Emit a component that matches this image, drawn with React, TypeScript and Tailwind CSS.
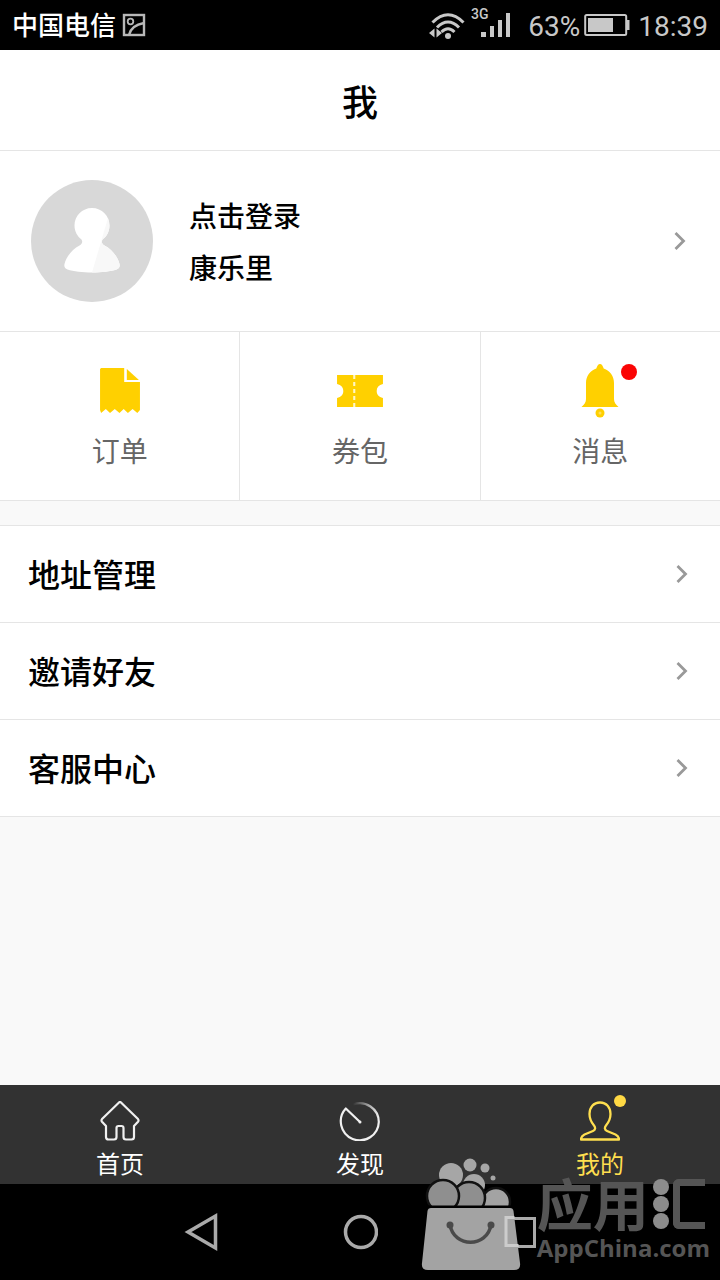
import type { ReactNode } from "react";

function Chevron() {
  return (
    <svg width="12" height="20" viewBox="0 0 12 20" fill="none" stroke="#999999" strokeWidth="2.8" aria-hidden="true">
      <path d="M1.500 2 9.500 10l-8 8" />
    </svg>
  );
}

function StatusBar() {
  return (
    <div className="flex h-[50px] items-center justify-between bg-black px-3 text-[#c8c8c8]">
      <div className="flex items-center gap-1.5">
        <span className="pb-0.5 text-[26px] font-medium leading-8 text-white">中国电信</span>
        <svg width="24" height="24" viewBox="0 0 24 24" fill="none" stroke="#b8b8b8" strokeWidth="2.4" aria-hidden="true">
          <rect x="2" y="2" width="20" height="20" />
          <circle cx="8.500" cy="8.500" r="2.800" strokeWidth="1.8" />
          <path d="M7 22C8.500 15.500 13 11.500 22 10" />
        </svg>
      </div>
      <div className="flex items-center">
        <svg width="84" height="34" viewBox="0 0 84 34" fill="none" aria-hidden="true">
          <g stroke="#c8c8c8" strokeWidth="3">
            <path d="M4.500 14.500Q20 -1 35.500 14.500" />
            <path d="M9 19.500Q20 8.500 31 19.500" />
            <path d="M13.500 24Q20 17.500 26.500 24" />
          </g>
          <circle cx="20" cy="28" r="3" fill="#c8c8c8" />
          <path d="M6.500 20.500v9L1 25zM8.500 20.500v9L14 25z" fill="#c8c8c8" />
          <text x="43" y="11" fill="#c8c8c8" fontSize="14" fontWeight="500" fontFamily="Roboto, sans-serif">3G</text>
          <path d="M53 24h5v5h-5zM62 18h4v11h-4zM70 12h4v17h-4zM78 5h4v24h-4z" fill="#c8c8c8" />
        </svg>
        <span className="ml-4 pt-1 font-[Roboto,sans-serif] text-[28px] leading-8">63%</span>
        <svg className="ml-1" width="46" height="24" viewBox="0 0 46 24" fill="none" aria-hidden="true">
          <rect x="1.200" y="2" width="41" height="20" rx="1.500" stroke="#c8c8c8" strokeWidth="2" />
          <path d="M4 5h25v14H4zM43 7h2.500v10H43z" fill="#c8c8c8" />
        </svg>
        <span className="ml-2 pt-1 font-[Roboto,sans-serif] text-[28px] leading-8">18:39</span>
      </div>
    </div>
  );
}

function Avatar() {
  return (
    <svg width="122" height="122" viewBox="0 0 122 122" aria-hidden="true">
      <circle cx="61" cy="61" r="61" fill="#d8d8d8" />
      <path
        d="M61 28c10 0 17.500 8 17.500 17.500 0 6-3 11-7 14-1.500 2.500-.5 4.500 2 6C81 69.500 87 77 88.500 84c.7 3-.5 4.500-3 5.500-6 2-15 3-24.500 3s-18.500-1-24.500-3c-2.500-1-3.700-2.500-3-5.500C35 77 41 69.500 48.500 65.500c2.500-1.500 3.500-3.500 2-6-4-3-7-8-7-14C43.500 36 51 28 61 28z"
        fill="#ffffff"
      />
      <path d="M77 38c3 9 1 17-5.500 21.500-1.500 2.500-.5 4.500 2 6C81 69.500 87 77 88.500 84c.7 3-.5 4.500-3 5.500-6 2-15 3-24.500 3z" fill="#f8f8f8" />
    </svg>
  );
}

function OrderIcon() {
  return (
    <svg width="42" height="46" viewBox="0 0 40 46" preserveAspectRatio="none" fill="#ffd000" aria-hidden="true">
      <path d="M2 0h22v14h15v28l-2.500 3-4.500-4-4.500 4-4-4-4 4-4.500-4-4.500 4-4-4-4.500 4L1 42V1z" />
      <path d="M26.500 1 38 12H26.500z" />
    </svg>
  );
}

function CouponIcon() {
  return (
    <svg width="48" height="34" viewBox="0 0 46 34" preserveAspectRatio="none" aria-hidden="true">
      <path d="M1 1h44v9c-4 1-6 3.500-6 7s2 6 6 7v9H1v-9c4-1 6-3.500 6-7s-2-6-6-7z" fill="#ffd000" />
      <path d="M17.500 1v32" stroke="#fff6c8" strokeWidth="2" strokeDasharray="4 3" />
    </svg>
  );
}

function BellIcon() {
  return (
    <svg width="38" height="54" viewBox="0 0 38 54" fill="#ffd000" aria-hidden="true">
      <path d="M19 0c1.800 0 2.800 2 3.700 4.500C29 7 33 12 33 19v16c0 3 1.500 5.500 4.500 8H.5C3.500 40.500 5 38 5 35V19C5 12 9 7 15.300 4.500 16.200 2 17.200 0 19 0z" />
      <circle cx="19" cy="49" r="4.500" />
      <circle cx="19" cy="49" r="1.500" fill="#ffdf5c" />
    </svg>
  );
}

const rows = ["地址管理", "邀请好友", "客服中心"];

function Shortcut({ icon, label, dot }: { icon: ReactNode; label: string; dot?: boolean }) {
  return (
    <button type="button" className="flex flex-1 flex-col items-center border-r border-[#e5e5e5] pb-[30px] last:border-r-0">
      <span className="relative flex h-[98px] items-center pt-5">
        {icon}
        {dot && <span className="absolute -right-[18px] top-8 size-4 rounded-full bg-[#fa0505]" />}
      </span>
      <span className="text-[28px] leading-10 text-[#666666]">{label}</span>
    </button>
  );
}

function TabBar() {
  return (
    <nav className="flex h-[99px] bg-[#323232] text-2xl leading-8 text-white">
      <a href="#home" className="flex flex-1 flex-col items-center gap-1.5 pt-4">
        <svg width="40" height="40" viewBox="0 0 40 40" fill="none" stroke="#f0f0f0" strokeWidth="2.200" strokeLinejoin="round" aria-hidden="true">
          <path d="M19 1.500Q20 .5 21 1.500L38 18q1 1.500 0 2.700L34 25v11q0 2.500-2.500 2.500H26q-2.500 0-2.500-2.500V27q0-2-2-2h-3q-2 0-2 2v9q0 2.500-2.500 2.500H8.500Q6 38.500 6 36V25l-4-4.300Q1 19.500 2 18z" />
        </svg>
        首页
      </a>
      <a href="#discover" className="flex flex-1 flex-col items-center gap-1.5 pt-4">
        <svg width="42" height="40" viewBox="0 0 42 40" fill="none" stroke="#f0f0f0" strokeWidth="2.200" aria-hidden="true">
          <defs>
            <linearGradient id="dial" x1="0" y1="0" x2="1" y2="0">
              <stop offset="0" stopColor="#323232" />
              <stop offset="1" stopColor="#f0f0f0" />
            </linearGradient>
          </defs>
          <path d="M39.800 21a19 19 0 1 1-33-13.500L21 21" strokeLinejoin="round" />
          <path d="M14 3.500A19 19 0 0 1 39.800 21" stroke="url(#dial)" />
          <circle cx="21" cy="21" r="1.500" fill="#f0f0f0" stroke="none" />
        </svg>
        发现
      </a>
      <a href="#me" aria-current="page" className="flex flex-1 flex-col items-center gap-1.5 pt-4 text-[#ffdf4f]">
        <span className="relative">
          <svg width="40" height="40" viewBox="0 0 40 40" fill="none" stroke="#ffdf4f" strokeWidth="2.300" strokeLinejoin="round" aria-hidden="true">
            <path d="M20 1.500C26.500 1.500 30.500 6.500 30.500 13c0 5-2 8.500-4.500 11.500-1.700 2-1.500 4.500 1 5.500l8.500 3.500c2 1 3.500 2.500 3.500 5H1c0-2.500 1.500-4 3.500-5L13 30c2.500-1 2.700-3.500 1-5.500C11.500 21.500 9.500 18 9.500 13 9.500 6.500 13.500 1.500 20 1.500z" />
          </svg>
          <span className="absolute -right-1.5 -top-1.5 size-3 rounded-full bg-[#ffd944]" />
        </span>
        我的
      </a>
    </nav>
  );
}

function SystemNav() {
  return (
    <div className="flex h-24 justify-center bg-black">
      <button type="button" aria-label="返回" className="flex w-40 items-center justify-center">
        <svg width="36" height="40" viewBox="0 0 36 40" fill="none" stroke="#aaaaaa" strokeWidth="3.500" aria-hidden="true">
          <path d="M33.500 4v32L6 20z" />
        </svg>
      </button>
      <button type="button" aria-label="主屏幕" className="flex w-40 items-center justify-center">
        <svg width="36" height="36" viewBox="0 0 36 36" fill="none" stroke="#aaaaaa" strokeWidth="3.500" aria-hidden="true">
          <circle cx="19" cy="18" r="15.500" />
        </svg>
      </button>
      <button type="button" aria-label="最近任务" className="flex w-40 items-center justify-center">
        <svg width="32" height="32" viewBox="0 0 32 32" fill="none" stroke="#aaaaaa" strokeWidth="3" aria-hidden="true">
          <path d="M3.500 2.500h27v28h-27z" />
        </svg>
      </button>
    </div>
  );
}

function StoreBadge() {
  return (
    <div className="pointer-events-none absolute bottom-2.5 right-2.5 flex items-start gap-4">
      <svg width="101" height="112" viewBox="0 0 101 112" aria-hidden="true">
        <g fill="#a6a6a6">
          <circle cx="31" cy="17" r="12" />
          <circle cx="50" cy="7" r="6.500" />
          <circle cx="65" cy="10" r="4.500" />
          <circle cx="73" cy="20" r="2.500" />
          <circle cx="54" cy="27" r="11" />
        </g>
        <g fill="#8f8f8f" stroke="#111111" strokeWidth="2.500">
          <circle cx="76" cy="44" r="14" fill="#a3a3a3" />
          <circle cx="49" cy="40" r="16" />
          <circle cx="23" cy="38" r="16" />
        </g>
        <path d="M4 47.500h88V62H4z" fill="#000000" />
        <path d="M11 50h79q3 0 3.500 3L100 105q1 7-6 7H8q-7 0-6-7L7.500 53q.5-3 3.500-3z" fill="#a3a3a3" />
        <path d="M104 59.500H86v28h18" fill="none" stroke="#cccccc" strokeWidth="3" clipPath="url(#bagSide)" />
        <clipPath id="bagSide">
          <path d="M83 56h11l5 34H83z" />
        </clipPath>
        <path d="M30 67c4 23 37 23 41 0" stroke="#4a4a4a" fill="none" strokeWidth="3.500" />
        <circle cx="30" cy="67" r="3.500" fill="#4a4a4a" />
        <circle cx="71" cy="67" r="3.500" fill="#4a4a4a" />
      </svg>
      <div className="flex flex-col pt-5 text-[#555555]">
        <div className="flex h-[52px] items-center gap-1">
          <span className="pb-1 text-[56px] font-bold leading-[52px]">应用</span>
          <span className="flex flex-col gap-px">
            <i className="size-4 rounded-full bg-[#8c8c8c]" />
            <i className="size-4 rounded-full bg-[#8c8c8c]" />
            <i className="size-4 rounded-full bg-[#8c8c8c]" />
          </span>
          <i className="h-[50px] w-8 rounded-l-md border-y-[7px] border-l-[7px] border-[#555555]" />
        </div>
        <span className="pt-1 font-['Open_Sans',sans-serif] text-2xl font-bold leading-7">AppChina.com</span>
      </div>
    </div>
  );
}

export default function App() {
  return (
    <div className="relative flex min-h-screen flex-col bg-[#f9f9f9] font-['Noto_Sans_CJK_SC',sans-serif] text-black">
      <StatusBar />
      <header className="flex h-[101px] items-center justify-center border-b border-[#e5e5e5] bg-white">
        <h1 className="text-4xl font-medium">我</h1>
      </header>
      <main className="flex-1">
        <button type="button" className="flex w-full items-center border-b border-[#e5e5e5] bg-white py-[29px] pl-[31px] pr-[34px] text-left">
          <Avatar />
          <span className="ml-9 flex flex-1 flex-col text-[28px] font-medium leading-[52px]">
            <span>点击登录</span>
            <span>康乐里</span>
          </span>
          <Chevron />
        </button>
        <section className="flex border-b border-[#e5e5e5] bg-white">
          <Shortcut icon={<OrderIcon />} label="订单" />
          <Shortcut icon={<CouponIcon />} label="券包" />
          <Shortcut icon={<BellIcon />} label="消息" dot />
        </section>
        <ul className="mt-6 border-t border-[#e5e5e5] bg-white">
          {rows.map((row) => (
            <li key={row}>
              <a href="#more" className="flex h-[97px] items-center justify-between border-b border-[#e5e5e5] pl-7 pr-8 text-[32px] font-medium">
                <span className="pb-0.5">{row}</span>
                <Chevron />
              </a>
            </li>
          ))}
        </ul>
      </main>
      <TabBar />
      <SystemNav />
      <StoreBadge />
    </div>
  );
}
